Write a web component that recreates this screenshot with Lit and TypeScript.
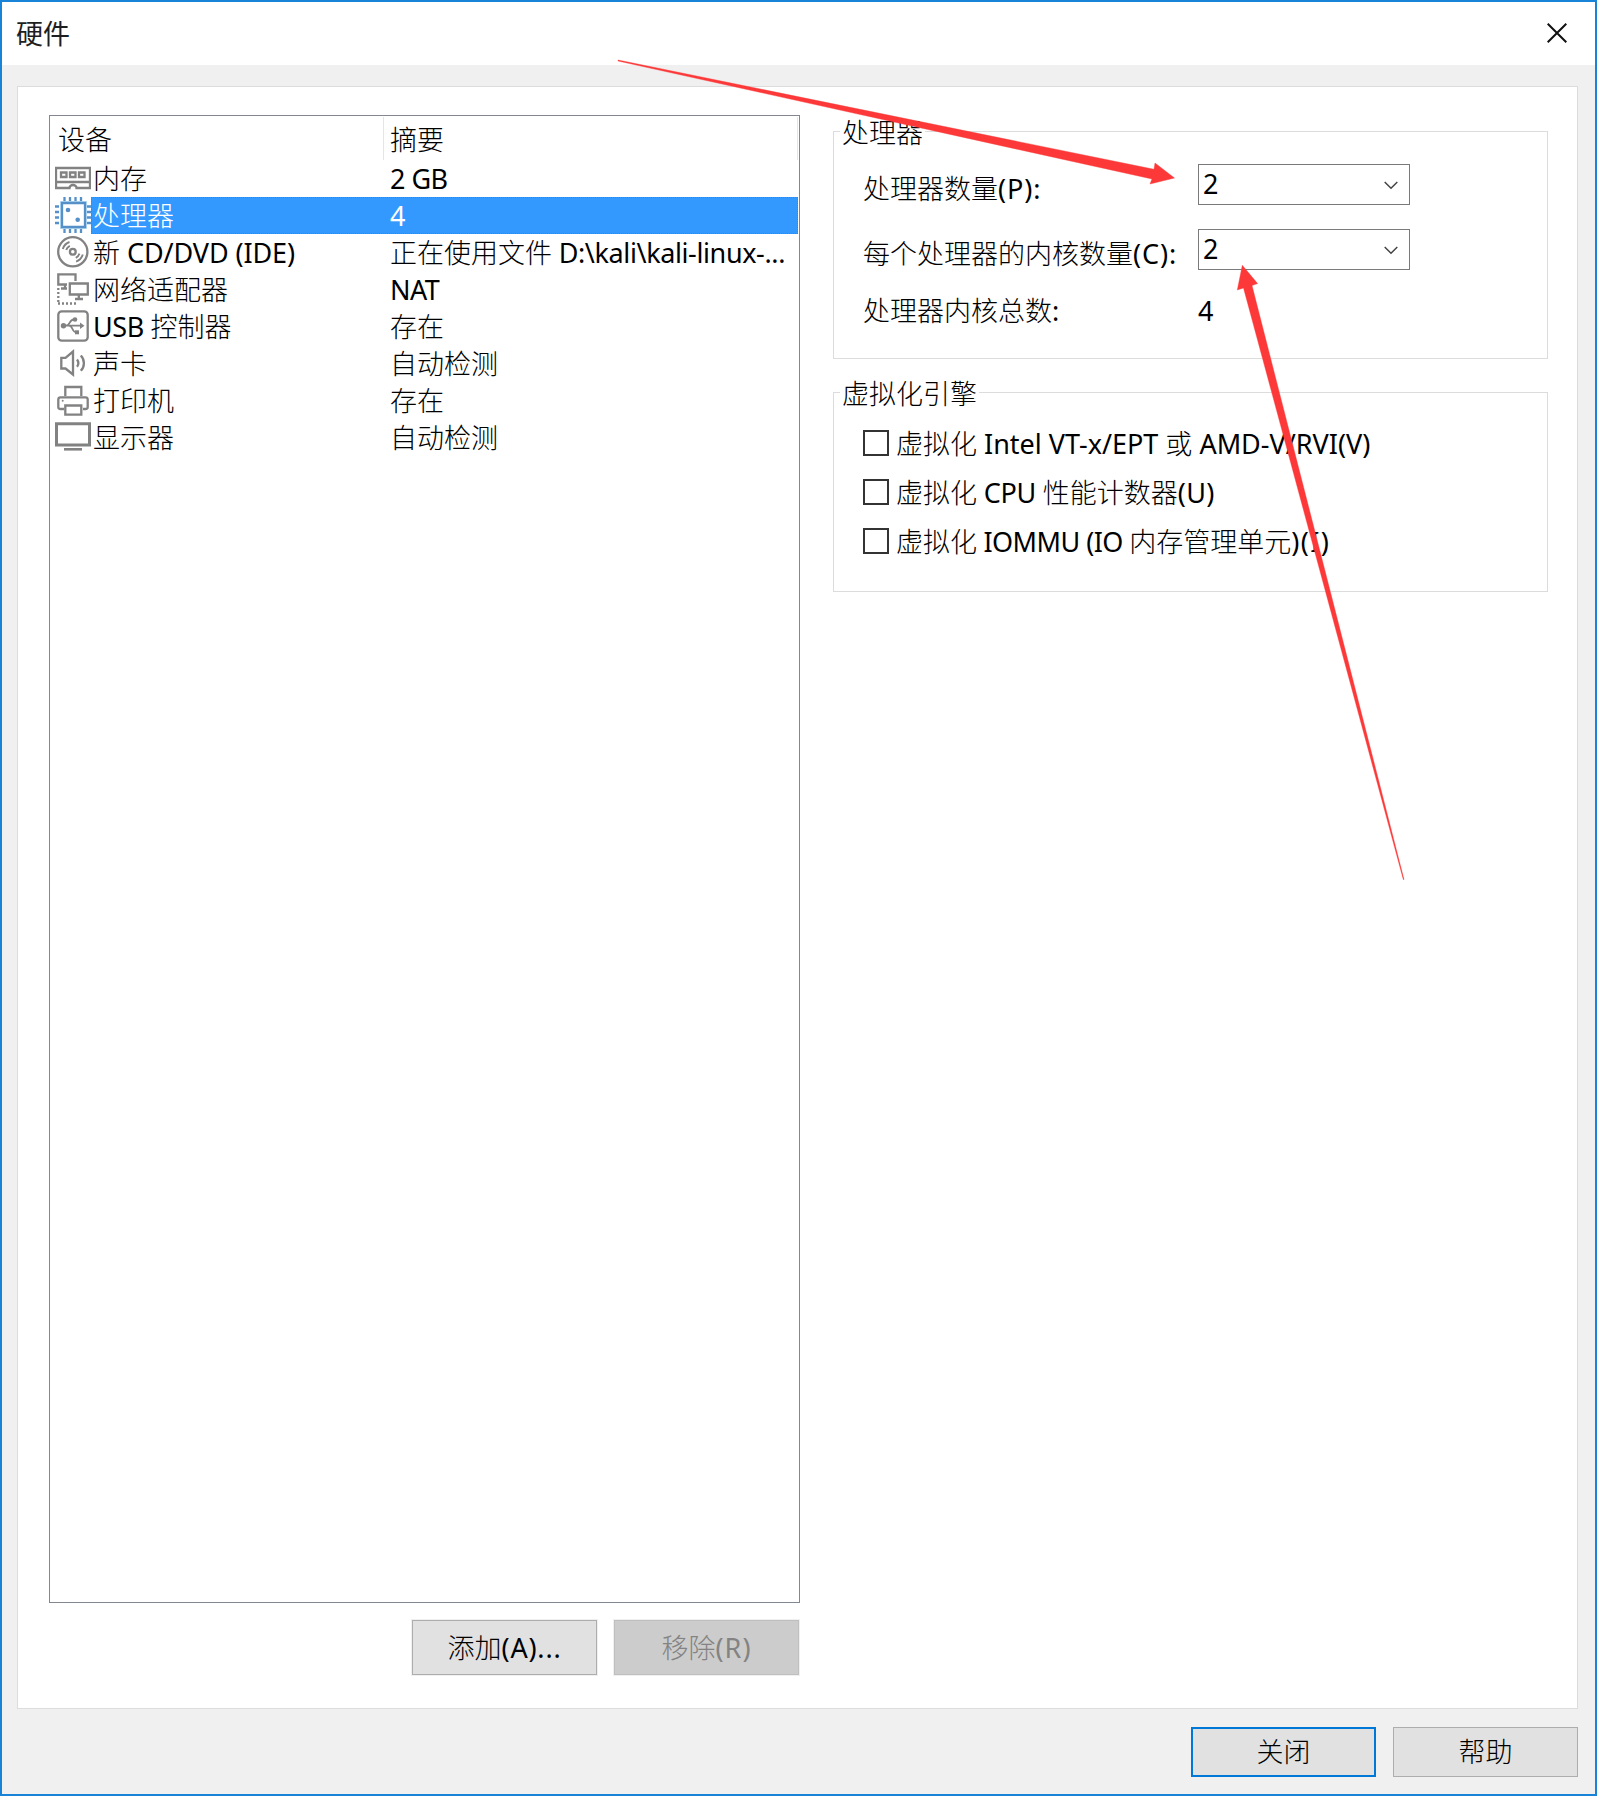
import { LitElement, html, svg, css } from "lit";
import { customElement, property } from "lit/decorators.js";

/* Letter spacing, in pixels, of the Latin runs that are set tighter or looser. */
const tracking: Record<string, number> = {
  "2 GB": -0.5,
  "NAT": -0.6,
  "USB ": -0.4,
  " CD/DVD (IDE)": -0.1,
  " D:\\kali\\kali-linux-...": -0.38,
  " CPU ": -0.3,
  " IOMMU (IO ": -0.55,
  ")(I)": 1.4,
  "(U)": 0.4,
  "(P):": 0.9,
  "(C):": 0.9,
  "(A)...": 0.8,
  "(R)": 1,
};

/* Renders a mixed string, giving Han runs and Latin runs their own type style. */
@customElement("mixed-text")
class MixedText extends LitElement {
  @property() value = "";
  static styles = css`
    :host { display: inline-block; white-space: pre; font: 400 26px/36px "Noto Sans", sans-serif; }
    .han { font-family: "Noto Sans CJK SC", sans-serif; font-size: 27px; font-weight: 300; line-height: 1; }
    .latin { font-size: 27px; line-height: 1; }
  `;
  render() {
    const runs = this.value.match(/[\u4e00-\u9fff]+|[^\u4e00-\u9fff]+/g) ?? [];
    return runs.map((r) =>
      /[\u4e00-\u9fff]/.test(r)
        ? html`<span class="han">${r}</span>`
        : html`<span class="latin" style="letter-spacing:${tracking[r] ?? 0}px">${r}</span>`);
  }
}

const icons: Record<string, unknown> = {
  memory: svg`<path d="M1 8H35V28H21.500A3.500 3 0 0 0 14.500 28H1Z M1 22H35"/><path d="M6 12.500h5.500v4.500H6Z M15 12.500h5.500v4.500H15Z M24 12.500h5.500v4.500H24Z"/>`,
  cpu: svg`<path stroke="#b9dcf3" stroke-width="4" d="M7 6H30V30H7Z"/><path fill="#fff" d="M7 6H30V30H7Z"/>
    <path d="M9.500 0V4M15 0V4M20.500 0V4M26 0V4M9.500 32V36M15 32V36M20.500 32V36M26 32V36M0 9.500H4M0 15H4M0 20.500H4M0 26H4M32 9.500H36M32 15H36M32 20.500H36M32 26H36"/>
    <circle class="solid" stroke="none" cx="13" cy="13" r="2.300"/><circle class="solid" stroke="none" cx="22.700" cy="22.700" r="2.300"/>`,
  disc: svg`<circle cx="17.800" cy="17.800" r="14.600"/><circle cx="17.800" cy="17.800" r="2.900"/><path d="M7.800 15A10.500 10.500 0 0 1 14.500 8M11.200 16A7 7 0 0 1 14.800 11.800M27.800 20.600A10.500 10.500 0 0 1 21.100 27.600M24.400 19.600A7 7 0 0 1 20.800 23.800" stroke-width="1.900"/>`,
  network: svg`<path d="M12 13.500H3.300V3.300H20.500V10M10 14V17.500M6 17.500H12"/><path d="M14.800 12.500H32.800V23.500H14.800ZM23.800 24V28M20 28H28"/><path stroke-dasharray="2 2" d="M3.300 17V33M3 32.500H23"/>`,
  usb: svg`<rect x="3.300" y="3.300" width="29.400" height="29.400" rx="3.500"/><path stroke-width="1.800" d="M8 17.700H27M11 17.700C15 17.700 14.500 11.500 18.500 11.500H20M14 17.700C18 17.700 17 24.300 21 24.300H22"/><path class="solid" stroke="none" d="M25 14.500L29.500 17.700L25 20.900Z"/><circle class="solid" stroke="none" cx="8.500" cy="17.700" r="2.700"/><circle class="solid" stroke="none" cx="20" cy="11.500" r="2.300"/><path class="solid" stroke="none" d="M20 22.300h4v4h-4Z"/>`,
  sound: svg`<path d="M6.300 12.800H10.500L18 6.500V29.500L10.500 23.500H6.300Z"/><path d="M22 14.500A6 6 0 0 1 22 21.800M25.800 10.500A11 11 0 0 1 25.800 25.800"/>`,
  printer: svg`<path d="M10.300 14V5H26.300V14M9 27H5.500Q3.300 27 3.300 25V17.500Q3.300 15.300 5.500 15.300H30.500Q32.700 15.300 32.700 17.500V25Q32.700 27 30.500 27H28"/><path d="M10.300 23.500H26.300V32.700H10.300Z"/><circle class="solid" stroke="none" cx="7.700" cy="18.800" r="1"/>`,
  display: svg`<path stroke-width="3" d="M1.500 4.800H34.500V26H1.500Z"/><path stroke-width="2.600" d="M9 30.300H27"/>`,
};

@customElement("device-icon")
class DeviceIcon extends LitElement {
  @property() name = "memory";
  static styles = css`
    :host { display: block; width: 36px; height: 36px; color: #828282; }
    :host([name="cpu"]) { color: #5590c8; }
    svg { display: block; fill: none; stroke: currentColor; stroke-width: 2.3; }
    .solid { fill: currentColor; }
  `;
  render() {
    return html`<svg width="36" height="36" viewBox="0 0 36 36">${icons[this.name]}</svg>`;
  }
}

const devices = [
  ["memory", "内存", "2 GB"],
  ["cpu", "处理器", "4"],
  ["disc", "新 CD/DVD (IDE)", "正在使用文件 D:\\kali\\kali-linux-..."],
  ["network", "网络适配器", "NAT"],
  ["usb", "USB 控制器", "存在"],
  ["sound", "声卡", "自动检测"],
  ["printer", "打印机", "存在"],
  ["display", "显示器", "自动检测"],
];
const options = ["虚拟化 Intel VT-x/EPT 或 AMD-V/RVI(V)", "虚拟化 CPU 性能计数器(U)", "虚拟化 IOMMU (IO 内存管理单元)(I)"];

@customElement("app-root")
class AppRoot extends LitElement {
  static styles = css`
    * { box-sizing: border-box; }
    :host { display: block; position: relative; width: 1597px; height: 1796px; color: #000; }
    .window { display: flex; flex-direction: column; width: 1597px; height: 1796px; border: 2px solid #1883d7; background: #f0f0f0; }
    .title { height: 63px; flex: none; background: #fff; display: flex; align-items: center; justify-content: space-between; padding: 0 28px 2px 14px; font: 400 27px/36px "Noto Sans CJK SC", sans-serif; color: #1e1e1e; }
    .close { display: block; fill: none; stroke: #111; stroke-width: 2; }
    .panel { margin: 21px 17px 0 15px; height: 1623px; flex: none; border: 1px solid #dcdcdc; background: #fff; display: flex; gap: 33px; padding: 28px 29px 0 31px; }
    .left { width: 751px; flex: none; }
    .list { height: 1488px; border: 1px solid #828790; padding: 1px; }
    .head { display: grid; grid-template-columns: 333px 1fr; height: 43px; }
    .head div { border-right: 1px solid #e5e5e5; padding: 5px 0 0 7px; }
    .head div + div { padding-left: 6px; }
    .row { display: flex; height: 37px; padding-left: 4px; }
    .cells { flex: 1; display: grid; grid-template-columns: 297px 1fr; padding: 1px 0 0 2px; align-items: center; white-space: nowrap; }
    .row.on .cells { background: #3399ff; color: #fff; outline: 1px dotted #cc6600; outline-offset: -1px; }
    .actions { display: flex; justify-content: flex-end; gap: 17px; margin-top: 17px; padding-right: 1px; }
    .btn { width: 185px; height: 55px; border: 1px solid #adadad; background: #e1e1e1; display: flex; align-items: center; justify-content: center; }
    .ring { box-shadow: 0 0 0 1px #f0f0f0; }
    .btn.off { background: #ccc; border-color: #bfbfbf; color: #838383; }
    .btn.primary { border: 2px solid #0078d7; }
    .right { width: 715px; }
    fieldset { margin: 0; border: 1px solid #dcdcdc; padding: 0; min-width: 0; width: 715px; }
    legend { padding: 4px 2px 0 2px; height: 30px; display: flex; align-items: center; margin-left: 6px; }
    .proc { height: 243px; margin-top: 1px; }
    .virt { height: 215px; margin-top: 18px; }
    .fields { padding: 18px 0 0 29px; }
    .field { display: grid; grid-template-columns: 335px 212px; height: 41px; margin-bottom: 24px; }
    .field .lab { padding-top: 7px; }
    .total { margin-top: -7px; }
    .total .lab, .total .num { padding-top: 6px; }
    .combo { height: 41px; border: 1px solid #7a7a7a; display: flex; justify-content: space-between; align-items: center; padding: 0 11px 1px 4px; }
    .combo svg { fill: none; stroke: #444; stroke-width: 1.5; margin-top: 2px; }
    .check { display: flex; align-items: center; gap: 7px; height: 26px; margin-bottom: 23px; white-space: nowrap; }
    .check mixed-text { padding-top: 2px; }
    .checks { padding: 23px 0 0 29px; }
    .box { width: 26px; height: 26px; border: 2px solid #333; flex: none; }
    .footer { display: flex; justify-content: flex-end; gap: 17px; padding: 18px 17px 0 0; }
    .footer .btn { height: 50px; }
    .marks { position: absolute; left: 0; top: 0; pointer-events: none; fill: #fc3838; stroke: #fc3838; stroke-width: 0.4; }
  `;
  combo() {
    return html`<div class="combo"><mixed-text value="2"></mixed-text>
      <svg width="14" height="9" viewBox="0 0 14 9"><path d="M0.700 1L7 7.300L13.300 1"/></svg></div>`;
  }
  render() {
    return html`
      <div class="window">
        <div class="title"><span>硬件</span>
          <svg class="close" width="20" height="20" viewBox="0 0 20 20"><path d="M0.700 0.700L19.300 19.300M19.300 0.700L0.700 19.300"/></svg>
        </div>
        <div class="panel">
          <div class="left">
            <div class="list">
              <div class="head"><div><mixed-text value="设备"></mixed-text></div><div><mixed-text value="摘要"></mixed-text></div></div>
              ${devices.map(([icon, name, summary]) => html`
                <div class="row ${icon === "cpu" ? "on" : ""}">
                  <device-icon name=${icon}></device-icon>
                  <div class="cells"><mixed-text value=${name}></mixed-text><mixed-text value=${summary}></mixed-text></div>
                </div>`)}
            </div>
            <div class="actions">
              <div class="btn ring"><mixed-text value="添加(A)..."></mixed-text></div>
              <div class="btn ring off"><mixed-text value="移除(R)"></mixed-text></div>
            </div>
          </div>
          <div class="right">
            <fieldset class="proc">
              <legend><mixed-text value="处理器"></mixed-text></legend>
              <div class="fields">
                <div class="field"><mixed-text class="lab" value="处理器数量(P):"></mixed-text>${this.combo()}</div>
                <div class="field"><mixed-text class="lab" value="每个处理器的内核数量(C):"></mixed-text>${this.combo()}</div>
                <div class="field total"><mixed-text class="lab" value="处理器内核总数:"></mixed-text><mixed-text class="num" value="4"></mixed-text></div>
              </div>
            </fieldset>
            <fieldset class="virt">
              <legend><mixed-text value="虚拟化引擎"></mixed-text></legend>
              <div class="checks">
                ${options.map((o) => html`<div class="check"><span class="box"></span><mixed-text value=${o}></mixed-text></div>`)}
              </div>
            </fieldset>
          </div>
        </div>
        <div class="footer">
          <div class="btn primary"><mixed-text value="关闭"></mixed-text></div>
          <div class="btn"><mixed-text value="帮助"></mixed-text></div>
        </div>
      </div>
      <svg class="marks" width="1597" height="1796" viewBox="0 0 1597 1796">
        <path d="M618 60L618 61L1152 179L1150 184L1174.500 178L1155 163L1154 169.300Z"/>
        <path d="M1242.300 265.300L1257.600 283.600L1252 285.600L1404 879.500L1403.300 879.500L1243.500 288L1237.300 290Z"/>
      </svg>`;
  }
}
